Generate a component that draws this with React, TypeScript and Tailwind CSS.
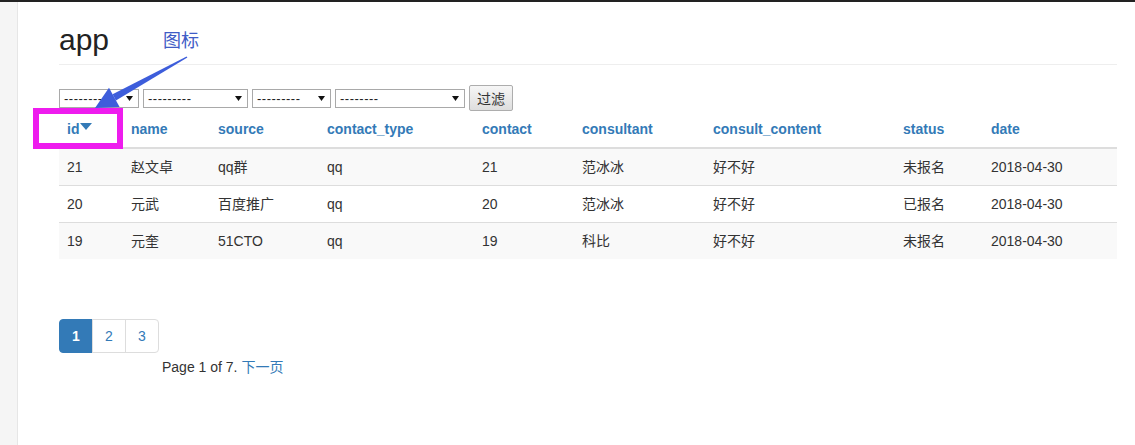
import React from "react";

interface Row {
  id: string;
  name: string;
  source: string;
  contactType: string;
  contact: string;
  consultant: string;
  content: string;
  status: string;
  date: string;
}

const columns = [
  { key: "id", label: "id", width: "w-[64px]" },
  { key: "name", label: "name", width: "w-[87px]" },
  { key: "source", label: "source", width: "w-[109px]" },
  { key: "contactType", label: "contact_type", width: "w-[155px]" },
  { key: "contact", label: "contact", width: "w-[100px]" },
  { key: "consultant", label: "consultant", width: "w-[131px]" },
  { key: "content", label: "consult_content", width: "w-[190px]" },
  { key: "status", label: "status", width: "w-[88px]" },
  { key: "date", label: "date", width: "w-[134px]" },
];

const rows: Row[] = [
  { id: "21", name: "赵文卓", source: "qq群", contactType: "qq", contact: "21", consultant: "范冰冰", content: "好不好", status: "未报名", date: "2018-04-30" },
  { id: "20", name: "元武", source: "百度推广", contactType: "qq", contact: "20", consultant: "范冰冰", content: "好不好", status: "已报名", date: "2018-04-30" },
  { id: "19", name: "元奎", source: "51CTO", contactType: "qq", contact: "19", consultant: "科比", content: "好不好", status: "未报名", date: "2018-04-30" },
];

const selects = [
  { width: "w-[80px]", text: "----------" },
  { width: "w-[105px]", text: "---------" },
  { width: "w-[79px]", text: "---------" },
  { width: "w-[130px]", text: "--------" },
];

function FakeSelect({ width, text }: { width: string; text: string }) {
  return (
    <div className={`${width} h-[19px] border border-[#a9a9a9] bg-white flex items-center justify-between pl-[4px] pr-[5px] overflow-hidden`}>
      <span className="text-[13px] leading-none text-[#222] tracking-[0.5px]">{text}</span>
      <svg width="7" height="5" viewBox="0 0 7 5">
        <polygon points="0,0 7,0 3.5,5" fill="#111" />
      </svg>
    </div>
  );
}

export default function App() {
  return (
    <div className="relative w-[1135px] h-[445px] bg-white overflow-hidden font-[Liberation_Sans,Noto_Sans_CJK_SC,sans-serif] text-[14px] text-[#333]">
      <div className="h-[2px] bg-[#222]"></div>
      <div className="flex h-[443px]">
        {/* left strip */}
        <div className="w-[18px] shrink-0 bg-[#f5f5f5] border-r border-[#e6e6e6]"></div>

        <div className="flex-1 pl-[41px] pr-[18px]">
          {/* page header */}
          <div className="pt-[21px] pb-[8px] border-b border-[#eee]">
            <h2 className="text-[30px] leading-[33px] text-[#222]">app</h2>
          </div>

          {/* filters */}
          <div className="mt-[20px] flex items-center gap-[4px]">
            {selects.map((s, i) => (
              <FakeSelect key={i} width={s.width} text={s.text} />
            ))}
            <button className="w-[44px] h-[26px] border border-[#adadad] rounded-[2px] bg-gradient-to-b from-[#f6f6f6] to-[#dedede] text-[14px] text-[#333] font-[Noto_Sans_CJK_SC,sans-serif]">
              过滤
            </button>
          </div>

          {/* table */}
          <table className="w-[1058px] border-collapse table-fixed">
            <thead>
              <tr>
                {columns.map((c) => (
                  <th
                    key={c.key}
                    className={`${c.width} text-left px-[8px] py-[8px] leading-[20px] border-b-2 border-[#ddd] font-bold text-[#337ab7]`}
                  >
                    <span className="inline-flex items-center">
                      {c.label}
                      {c.key === "id" && (
                        <svg width="12" height="8" viewBox="0 0 12 8" className="ml-[1px] -mt-[4px]">
                          <polygon points="0,0 12,0 6,7" fill="#337ab7" />
                        </svg>
                      )}
                    </span>
                  </th>
                ))}
              </tr>
            </thead>
            <tbody>
              {rows.map((r, i) => (
                <tr key={r.id} className={i % 2 === 0 ? "bg-[#f9f9f9]" : "bg-white"}>
                  {columns.map((c) => (
                    <td key={c.key} className="px-[8px] py-[8px] leading-[20px] border-t border-[#ddd]">
                      {r[c.key as keyof Row]}
                    </td>
                  ))}
                </tr>
              ))}
            </tbody>
          </table>

          {/* pagination */}
          <div className="mt-[60px] flex">
            <span className="w-[34px] h-[34px] flex items-center justify-center bg-[#337ab7] border border-[#337ab7] text-white font-bold rounded-l-[4px]">
              1
            </span>
            <span className="w-[34px] h-[34px] flex items-center justify-center border border-[#ddd] -ml-px text-[#337ab7]">
              2
            </span>
            <span className="w-[34px] h-[34px] flex items-center justify-center border border-[#ddd] -ml-px text-[#337ab7] rounded-r-[4px]">
              3
            </span>
          </div>
          <div className="mt-[4px] pl-[103px] leading-[20px]">
            Page 1 of 7. <span className="text-[#337ab7]">下一页</span>
          </div>
        </div>
      </div>

      {/* annotation overlay */}
      <div className="absolute left-[163px] top-[28px] text-[18px] leading-[22px] text-[#3f5cc6] font-[Noto_Sans_CJK_SC,sans-serif]">
        图标
      </div>
      <div className="absolute left-[33px] top-[108px] w-[90px] h-[41px] border-[6px] border-[#ee1cee]"></div>
      <svg className="absolute left-0 top-0" width="220" height="130" viewBox="0 0 220 130">
        <polygon points="187.4,57.4 186.6,56.6 112.6,94.2 115.9,100.4" fill="#3d5ddb" />
        <polygon points="95,108 109,87.7 119.6,106.9" fill="#3d5ddb" />
      </svg>
    </div>
  );
}
